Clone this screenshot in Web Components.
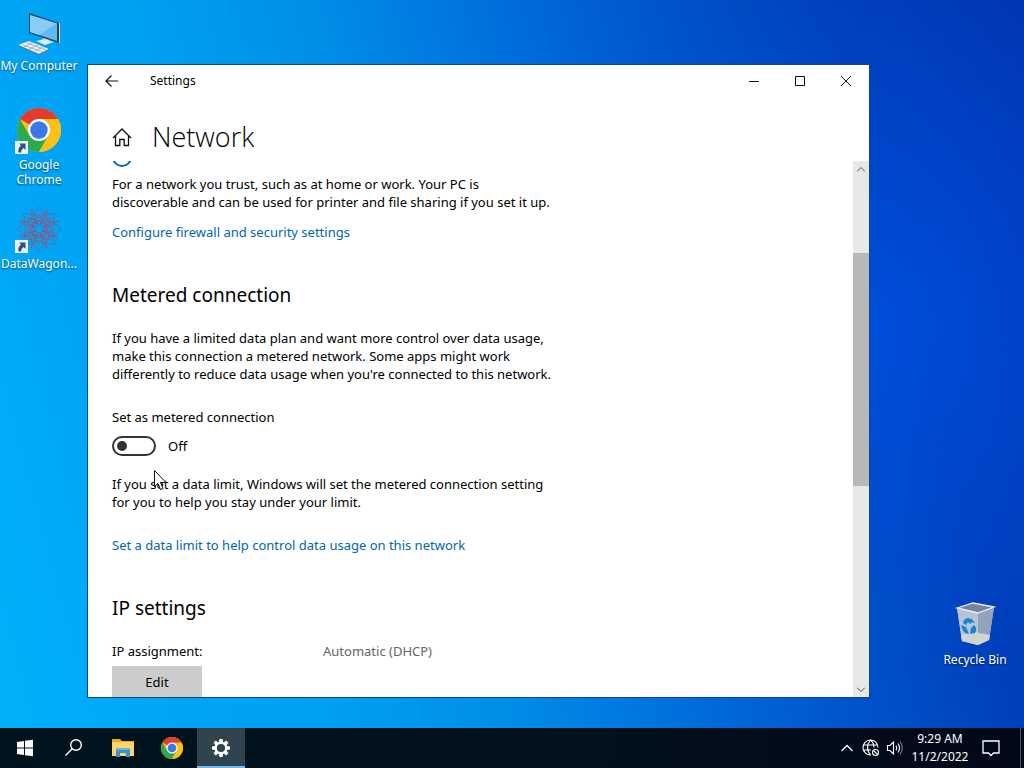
<!DOCTYPE html>
<html lang="en">
<head>
<meta charset="utf-8">
<meta name="viewport" content="width=device-width, initial-scale=1">
<title>Settings</title>
<style>
    html, body {
        height: 100%;
        margin: 0;
    }

    body {
        font-family: "Noto Sans", "Open Sans", sans-serif;
        font-size: 13px;
        line-height: 18px;
        color: #000;
        overflow: hidden;
    }
</style>
</head>
<body>

<win-desktop>
    <desktop-icon icon="computer" name="My Computer"></desktop-icon>
    <desktop-icon icon="chrome" name="Google Chrome" shortcut></desktop-icon>
    <desktop-icon icon="wagon" name="DataWagon..." shortcut></desktop-icon>
    <desktop-icon slot="corner" icon="bin" name="Recycle Bin"></desktop-icon>

    <app-window slot="window" name="Settings" heading="Network">
        <network-page></network-page>
    </app-window>

    <task-bar slot="taskbar"></task-bar>
</win-desktop>

<script>
const chrome = `
    <circle cx="24" cy="24" r="22" fill="#fbc116"/>
    <path d="M24 24 L4.950 13 A22 22 0 0 1 43.050 13 Z" fill="#e33b2e"/>
    <path d="M4.950 13 A22 22 0 0 0 24 46 L33.500 29.500 L24 24 L14.500 29.500 Z" fill="#2da94f"/>
    <path d="M24 13 H43.050 A22 22 0 0 1 24 46 L33.500 29.500 Z" fill="#fbc116"/>
    <circle cx="24" cy="24" r="11" fill="#fff"/>
    <circle cx="24" cy="24" r="8.700" fill="#3b78e7"/>`

const petals = Array.from({ length: 8 }, (_, i) => `
    <g transform="rotate(${i * 45} 24 24)">
        <path d="M24 2 L31 11 L24 21 L17 11 Z" stroke="#5a6aa6"/>
        <path d="M15 5 L24 13 L33 5 M18 18 L24 9 L30 18" stroke="#94587f"/>
        <path d="M20 19 L24 15 L28 19" stroke="#b8406a"/>
    </g>`).join('')

const desktopIcons = {
    computer: `
        <path d="M14 6 L44 16 L44 36 L14 26 Z" fill="#23435c"/>
        <path d="M15 8 L42 16.500 L42 34 L15 25 Z" fill="#5fb9f2"/>
        <path d="M15 8 L42 16.500 L24 28 L15 25 Z" fill="#86cdf8"/>
        <path d="M44 16 L45 16 L45 36 L44 36 Z" fill="#d8e4ea"/>
        <path d="M28 31 L34 33 L33 37 L26 35 Z" fill="#a9b9c3"/>
        <path d="M21 34 L30 32 L39 35 L30 38 Z" fill="#dfe8ec"/>
        <path d="M3 38 L14 34 L34 42 L24 47 Z" fill="#e8eef1"/>
        <path d="M3 38 L24 47 L34 42 L34 43 L24 48 L3 39 Z" fill="#5b7889"/>
        <path d="M8 38 L28 45 M12 36 L31 43 M9 40 L18 36 M14 42 L23 38 M20 44 L28 40" stroke="#9aabb5" stroke-width="0.8"/>`,
    chrome,
    wagon: `<g fill="none" stroke-width="0.900">${petals}</g>`,
    bin: `
        <path d="M6 7 L22 2 L43 6 L38 39 L27 44 L11 40 Z" fill="#a8b6c9"/>
        <path d="M6 7 L27 12 L27 44 L11 40 Z" fill="#b9c4d3"/>
        <path d="M27 12 L43 6 L38 39 L27 44 Z" fill="#93a3bd"/>
        <path d="M10 34 L22 31 L39 34 L38 39 L27 44 L11 40 Z" fill="#d0d4d2"/>
        <path d="M6 7 L22 2 L43 6 L27 12 Z" fill="#74859d" stroke="#e9f0f6" stroke-width="1.300"/>
        <path d="M12 22 Q13 17 18 17 L22 20 L19 23 L17 21 L15 24 Z M10 24 L15 26 L18 33 Q12 33 10 24 Z M19 33 L24 32 Q27 28 23 24 L20 27 Z M20 17 L24 22 L20 21 Z" fill="#1683d8"/>`
}

const cog = Array.from({ length: 8 }, (_, i) =>
    `<path d="M10.500 3 L13.500 3 L14.200 7 L9.800 7 Z" transform="rotate(${i * 45} 12 12)"/>`).join('')

const taskIcons = {
    start: `<path fill="#fff" d="M4 6 L11 5 V11.500 H4 Z M12 4.800 L20 3.700 V11.500 H12 Z M4 12.500 H11 V19 L4 18 Z M12 12.500 H20 V20.300 L12 19.200 Z"/>`,
    search: `<g fill="none" stroke="#fff" stroke-width="1.400"><circle cx="14" cy="9" r="5.300"/><path d="M10.200 12.800 L3.500 19.500"/></g>`,
    explorer: `
        <path d="M1 3 H9 L11 5 H23 V20 H1 Z" fill="#e9a92c"/>
        <path d="M1 6 H23 V20 H1 Z" fill="#fbd665"/>
        <path d="M5 12 H19 V21 H15 V17 H9 V21 H5 Z" fill="#3d90cf"/>
        <path d="M5 12 H19 V14 H5 Z" fill="#69b2e4"/>`,
    chrome,
    settings: `<g fill="#fff">${cog}<circle cx="12" cy="12" r="5.200" fill="none" stroke="#fff" stroke-width="2.200"/></g>`
}


class WinDesktop extends HTMLElement {

    connectedCallback() {
        this.attachShadow({ mode: 'open' })
        this.render()
    }

    static get styles() {
        return `
        :host {
            display: flex;
            flex-direction: column;
            height: 100vh;
            background:
                radial-gradient(ellipse 30% 45% at 86% 42%, rgba(0, 84, 235, 0.6), transparent),
                linear-gradient(75deg, #00b2fa 0%, #00a2f4 20%, #00a0f0 28%, #008ee8 42%, #006edc 57%, #0055cc 70%, #003fbc 84%, #0036b4 100%);
        }

        main {
            position: relative;
            flex: 1;
            min-height: 0;
        }

        nav {
            display: flex;
            flex-direction: column;
            width: 78px;
        }

        .corner {
            position: absolute;
            right: 10px;
            bottom: 35px;
        }

        .window {
            position: absolute;
            inset: 64px 154px 30px 87px;
            display: flex;
        }

        .cursor {
            position: absolute;
            left: 154px;
            top: 470px;
        }
        `
    }

    render() {
        this.shadowRoot.innerHTML = `
        <style>${WinDesktop.styles}</style>
        <main>
            <nav><slot></slot></nav>
            <div class="corner"><slot name="corner"></slot></div>
            <div class="window"><slot name="window"></slot></div>
            <svg class="cursor" width="14" height="21" viewBox="0 0 14 21" aria-hidden="true">
                <path d="M0.500 0.500 V16.500 L4 13.500 L6.500 19.500 L9 18.500 L6.500 12.500 H12 Z" fill="#fff" stroke="#111"/>
            </svg>
        </main>
        <slot name="taskbar"></slot>
        `
    }
}

customElements.define('win-desktop', WinDesktop)


class DesktopIcon extends HTMLElement {

    connectedCallback() {
        this.attachShadow({ mode: 'open' })
        this.render()
    }

    static get styles() {
        return `
        :host {
            display: block;
            box-sizing: border-box;
            width: 78px;
            height: 99px;
            padding-top: 7px;
        }

        button {
            display: flex;
            flex-direction: column;
            align-items: center;
            gap: 3px;
            width: 100%;
            padding: 0;
            border: none;
            background: none;
            color: #fff;
            font: inherit;
            font-size: 12px;
            line-height: 15px;
            text-shadow: 0 1px 2px rgba(0, 0, 0, 0.6);
        }

        .picture {
            position: relative;
            width: 48px;
            height: 48px;
        }

        .arrow {
            position: absolute;
            left: 0;
            bottom: 0;
        }
        `
    }

    render() {
        const icon = desktopIcons[this.getAttribute('icon')]
        const arrow = `
            <svg class="arrow" width="13" height="13" viewBox="0 0 13 13">
                <path d="M0 0 H13 V13 H0 Z" fill="#eef3f8"/>
                <path d="M4 2.500 H10.500 V9 L8.500 7 Q6 8.500 6 11.500 H3.500 Q2.500 7.500 6 4.500 Z" fill="#2b4f86"/>
            </svg>`

        this.shadowRoot.innerHTML = `
        <style>${DesktopIcon.styles}</style>
        <button>
            <span class="picture">
                <svg width="48" height="48" viewBox="0 0 48 48">${icon}</svg>
                ${this.hasAttribute('shortcut') ? arrow : ''}
            </span>
            <span>${this.getAttribute('name')}</span>
        </button>
        `
    }
}

customElements.define('desktop-icon', DesktopIcon)


class AppWindow extends HTMLElement {

    connectedCallback() {
        this.attachShadow({ mode: 'open' })
        this.render()
    }

    static get styles() {
        return `
        :host {
            flex: 1;
            display: flex;
            flex-direction: column;
            min-width: 0;
            background: #fff;
            border: 1px solid #0b4a80;
        }

        button {
            display: flex;
            align-items: center;
            justify-content: center;
            padding: 0;
            border: none;
            background: none;
        }

        svg {
            fill: none;
            stroke: #111;
        }

        .titlebar {
            display: flex;
            align-items: stretch;
            height: 32px;
            font-size: 12px;
        }

        .titlebar button {
            width: 46px;
        }

        .titlebar .back {
            width: 48px;
        }

        .name {
            flex: 1;
            align-self: center;
            padding-left: 14px;
        }

        header {
            display: flex;
            align-items: center;
            gap: 20px;
            height: 48px;
            padding: 16px 24px 0;
        }

        h1 {
            margin: 0;
            font-family: "Open Sans", sans-serif;
            font-size: 27px;
            font-weight: 300;
            line-height: 36px;
        }

        .body {
            flex: 1;
            display: flex;
            min-height: 0;
        }

        .view {
            flex: 1;
            min-width: 0;
            overflow: hidden;
        }
        `
    }

    render() {
        this.shadowRoot.innerHTML = `
        <style>${AppWindow.styles}</style>
        <div class="titlebar">
            <button class="back" aria-label="Back">
                <svg width="14" height="14" viewBox="0 0 14 14" stroke-width="1.200"><path d="M13 7 H1.500 M6.500 1.500 L1 7 L6.500 12.500"/></svg>
            </button>
            <span class="name">${this.getAttribute('name')}</span>
            <button aria-label="Minimize"><svg width="10" height="10" viewBox="0 0 10 10"><path d="M0 5.500 H10"/></svg></button>
            <button aria-label="Maximize"><svg width="10" height="10" viewBox="0 0 10 10"><path d="M0.500 0.500 H9.500 V9.500 H0.500 Z"/></svg></button>
            <button aria-label="Close"><svg width="10" height="10" viewBox="0 0 10 10"><path d="M0 0 L10 10 M10 0 L0 10"/></svg></button>
        </div>
        <header>
            <button aria-label="Home">
                <svg width="20" height="20" viewBox="0 0 20 20" stroke-width="1.300"><path d="M1 11 L10 2 L19 11 M3.500 9 V18.500 H7.800 V12.500 H12.200 V18.500 H16.500 V9"/></svg>
            </button>
            <h1>${this.getAttribute('heading')}</h1>
        </header>
        <div class="body">
            <div class="view"><slot></slot></div>
            <scroll-strip></scroll-strip>
        </div>
        `
    }
}

customElements.define('app-window', AppWindow)


class ScrollStrip extends HTMLElement {

    connectedCallback() {
        this.attachShadow({ mode: 'open' })
        this.render()
    }

    static get styles() {
        return `
        :host {
            display: flex;
            flex-direction: column;
            width: 16px;
            background: #e8e8e8;
        }

        button {
            display: flex;
            align-items: center;
            justify-content: center;
            height: 16px;
            padding: 0;
            border: none;
            background: none;
        }

        svg {
            fill: none;
            stroke: #505050;
        }

        .before { flex: 76; }
        .thumb { flex: 233; background: #b8b8b8; }
        .after { flex: 195; }
        `
    }

    render() {
        this.shadowRoot.innerHTML = `
        <style>${ScrollStrip.styles}</style>
        <button aria-label="Scroll up"><svg width="8" height="5" viewBox="0 0 8 5"><path d="M0 4.500 L4 0.500 L8 4.500"/></svg></button>
        <div class="before"></div>
        <div class="thumb"></div>
        <div class="after"></div>
        <button aria-label="Scroll down"><svg width="8" height="5" viewBox="0 0 8 5"><path d="M0 0.500 L4 4.500 L8 0.500"/></svg></button>
        `
    }
}

customElements.define('scroll-strip', ScrollStrip)


class NetworkPage extends HTMLElement {

    connectedCallback() {
        this.attachShadow({ mode: 'open' })
        this.render()
    }

    static get styles() {
        return `
        :host {
            display: block;
            max-width: 440px;
            padding-left: 24px;
        }

        p, h2, dl, dd {
            margin: 0;
        }

        h2 {
            margin: 40px 0 20px;
            font-size: 19px;
            font-weight: 400;
            line-height: 28px;
        }

        a {
            color: #0067ae;
            text-decoration: none;
        }

        /* scrolled almost out of view, only the bottom edge stays */
        .profile {
            display: block;
            appearance: none;
            box-sizing: border-box;
            width: 20px;
            height: 20px;
            margin: -14px 0 8px;
            border: 2px solid #0067b8;
            border-radius: 50%;
        }

        .link {
            margin-top: 12px;
        }

        .field {
            margin-top: 25px;
        }

        .toggle {
            display: flex;
            align-items: center;
            gap: 12px;
            margin: 10px 0 19px;
            height: 20px;
        }

        .toggle input {
            appearance: none;
            display: flex;
            align-items: center;
            box-sizing: border-box;
            width: 44px;
            height: 20px;
            margin: 0;
            padding-left: 3px;
            border: 2px solid #333;
            border-radius: 10px;
        }

        .toggle input::before {
            content: "";
            width: 10px;
            height: 10px;
            border-radius: 50%;
            background: #333;
        }

        .limit {
            margin-top: 25px;
        }

        dl {
            display: grid;
            grid-template-columns: 211px 1fr;
        }

        dd {
            color: #666;
        }

        button {
            width: 90px;
            height: 32px;
            margin-top: 6px;
            padding: 0;
            border: none;
            background: #ccc;
            color: #000;
            font: inherit;
        }
        `
    }

    render() {
        this.shadowRoot.innerHTML = `
        <style>${NetworkPage.styles}</style>
        <input class="profile" type="radio" name="profile" aria-label="Private">
        <p>For a network you trust, such as at home or work. Your PC is discoverable and can be used for printer and file sharing if you set it up.</p>
        <p class="link"><a href="#firewall">Configure firewall and security settings</a></p>

        <h2>Metered connection</h2>
        <p>If you have a limited data plan and want more control over data usage, make this connection a metered network. Some apps might work differently to reduce data usage when you're connected to this network.</p>
        <div class="field"><label for="metered">Set as metered connection</label></div>
        <div class="toggle">
            <input type="checkbox" role="switch" id="metered">
            <span class="state">Off</span>
        </div>
        <p>If you set a data limit, Windows will set the metered connection setting for you to help you stay under your limit.</p>
        <p class="limit"><a href="#limit">Set a data limit to help control data usage on this network</a></p>

        <h2>IP settings</h2>
        <dl>
            <dt>IP assignment:</dt>
            <dd>Automatic (DHCP)</dd>
        </dl>
        <button>Edit</button>
        `

        const metered = this.shadowRoot.querySelector('#metered')
        metered.addEventListener('change', () => {
            this.shadowRoot.querySelector('.state').textContent = metered.checked ? 'On' : 'Off'
        })
    }
}

customElements.define('network-page', NetworkPage)


class TaskBar extends HTMLElement {

    connectedCallback() {
        this.attachShadow({ mode: 'open' })
        this.render()
    }

    static get styles() {
        return `
        :host {
            display: flex;
            justify-content: space-between;
            height: 40px;
            background: linear-gradient(90deg, #00141d, #02101c 60%, #020818);
            color: #fff;
            font-size: 12px;
            line-height: 18px;
        }

        .apps {
            display: flex;
            gap: 1px;
            padding-left: 1px;
        }

        .tray {
            display: flex;
            align-items: center;
        }

        button {
            display: flex;
            align-items: center;
            justify-content: center;
            height: 40px;
            padding: 0;
            border: none;
            background: none;
            color: inherit;
            font: inherit;
        }

        .apps button {
            width: 48px;
        }

        .apps .active {
            background: #30444f;
            box-shadow: inset 0 -2px #76b9ed;
        }

        .tray button {
            width: 24px;
        }

        .tray .clock {
            width: 66px;
        }

        .tray .notes {
            width: 36px;
        }

        .tray svg {
            fill: none;
            stroke: #fff;
        }

        .peek {
            width: 3px;
            height: 40px;
            margin-left: 11px;
            border-left: 1px solid #4a5260;
        }
        `
    }

    button(id, label, box = 24) {
        return `
        <button class="${id === 'settings' ? 'active' : ''}" aria-label="${label}">
            <svg width="24" height="24" viewBox="0 0 ${box} ${box}">${taskIcons[id]}</svg>
        </button>`
    }

    render() {
        this.shadowRoot.innerHTML = `
        <style>${TaskBar.styles}</style>
        <div class="apps">
            ${this.button('start', 'Start')}
            ${this.button('search', 'Search')}
            ${this.button('explorer', 'File Explorer')}
            ${this.button('chrome', 'Google Chrome', 48)}
            ${this.button('settings', 'Settings')}
        </div>
        <div class="tray">
            <button aria-label="Show hidden icons"><svg width="12" height="8" viewBox="0 0 12 8" stroke-width="1.300"><path d="M0.500 7 L6 1.500 L11.500 7"/></svg></button>
            <button aria-label="Network">
                <svg width="18" height="18" viewBox="0 0 18 18" stroke-width="1.100">
                    <path d="M9 16 A7.500 7.500 0 1 1 16 8.500 M1.500 6 H15.500 M1.500 11 H9 M8.500 1 Q2.500 8.500 8.500 16 M8.500 1 Q12 4 12 8.500"/>
                    <circle cx="13.500" cy="13.500" r="3"/>
                    <path d="M11.500 11.500 L15.500 15.500"/>
                </svg>
            </button>
            <button aria-label="Volume">
                <svg width="18" height="18" viewBox="0 0 18 18" stroke-width="1.100">
                    <path d="M1.500 6.500 H4 L7.500 3 V15 L4 11.500 H1.500 Z M10 6.500 Q11.500 9 10 11.500 M12 4.500 Q15 9 12 13.500"/>
                    <path d="M14 2.500 Q18.500 9 14 15.500" stroke="#7a828c"/>
                </svg>
            </button>
            <button class="clock"><time datetime="2022-11-02T09:29">9:29 AM<br>11/2/2022</time></button>
            <button class="notes" aria-label="Notifications">
                <svg width="18" height="18" viewBox="0 0 18 18" stroke-width="1.300"><path d="M1 2 H17 V14 H11.500 L9 16.500 L6.500 14 H1 Z"/></svg>
            </button>
            <div class="peek"></div>
        </div>
        `
    }
}

customElements.define('task-bar', TaskBar)
</script>
</body>
</html>
